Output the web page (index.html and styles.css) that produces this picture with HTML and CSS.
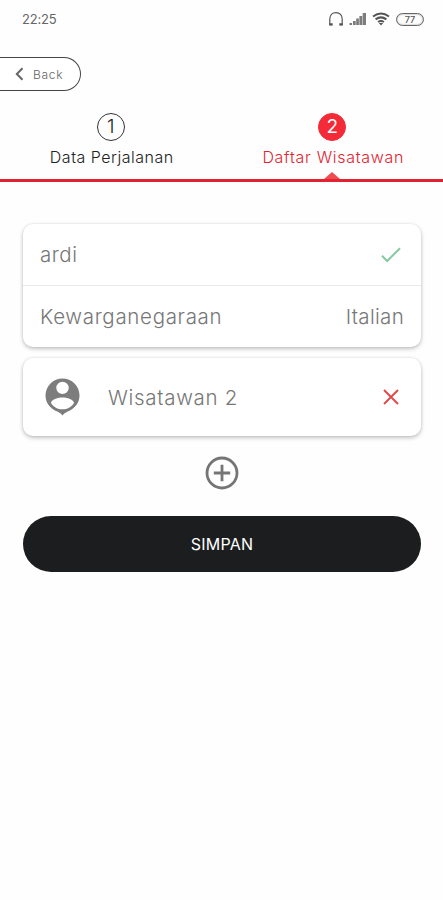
FILE: index.html
```html
<!DOCTYPE html>
<html lang="id">
<head>
<meta charset="utf-8">
<title>Daftar Wisatawan</title>
<link rel="stylesheet" href="styles.css">
</head>
<body>
<header class="status">
  <span class="time">22:25</span>
  <div class="indicators">
    <svg width="16" height="16" viewBox="0 0 16 16" fill="none" stroke="#555"><path d="M4 13.700H1.800V8c0-4 2.400-6.400 6.200-6.400S14.200 4 14.200 8v5.700H12" stroke-width="1.200"/><path d="M1.300 13.300h3.400M11.300 13.300h3.400" stroke-width="2.200"/></svg>
    <svg class="signal" width="18" height="14" viewBox="0 0 18 14" fill="#7c7c7c"><path d="M.5 11H3v2H.5zM4 9h2.700v4H4zM7.200 6.500h2.700V13H7.200zM10.400 4h2.800v9h-2.800zM13.700 1H17v12h-3.300z"/></svg>
    <svg class="wifi" width="18" height="14" viewBox="0 0 18 14" fill="none" stroke="#555" stroke-width="2"><path d="M1 4.500Q9-1.400 17 4.500M3.600 7.400Q9 3.300 14.400 7.400M6.100 10Q9 7.900 11.900 10"/><path d="M6.800 11h4.400L9 13.600z" fill="#555" stroke="none"/></svg>
    <span class="battery">77</span>
  </div>
</header>
<button class="back">
  <svg width="9" height="14" viewBox="0 0 9 14" fill="none" stroke="#666" stroke-width="2"><path d="M7.500 1.200L1.800 7l5.700 5.800"/></svg>
  <span>Back</span>
</button>
<nav class="steps">
  <div class="step"><span class="num">1</span><span class="label first">Data Perjalanan</span></div>
  <div class="step active"><span class="num">2</span><span class="label">Daftar Wisatawan</span></div>
</nav>
<main>
  <section class="card">
    <div class="row name"><span class="ardi">ardi</span>
      <svg width="20" height="16" viewBox="0 0 20 16" fill="none" stroke="#87c9a2" stroke-width="2"><path d="M1 8.800l5.200 5.200L19 1.200"/></svg>
    </div>
    <div class="row nation"><span class="key">Kewarganegaraan</span><span class="value">Italian</span></div>
  </section>
  <section class="card traveller">
    <svg class="person" width="35" height="38" viewBox="0 0 35 38"><path fill="#7d7d7d" fill-rule="evenodd" d="M17.500.5A17 17 0 0 0 .5 17.500c0 7 4.200 12.500 10.500 15.500 2.500 1.100 4.500 1.900 6.500 4.500 2-2.600 4-3.400 6.500-4.500 6.300-3 10.500-8.500 10.500-15.500a17 17 0 0 0-17-17zm0 3.200a6.200 6.200 0 1 1 0 12.400 6.200 6.200 0 0 1 0-12.400zm0 15.700c6 0 11.500 2.600 11.500 5.500-2.600 4-6.700 6.400-11.500 6.400S8.600 28.900 6 24.900c0-2.900 5.500-5.500 11.500-5.500z"/></svg>
    <span class="tname">Wisatawan 2</span>
    <svg class="cross" width="16" height="16" viewBox="0 0 16 16" stroke="#e34848" stroke-width="1.900"><path d="M1 1l14 14M15 1L1 15"/></svg>
  </section>
  <svg class="add" width="34" height="34" viewBox="0 0 34 34" fill="none" stroke="#757575" stroke-width="2.800"><circle cx="17" cy="17" r="15"/><path d="M17 8.800v16.400M8.800 17h16.400"/></svg>
  <button class="save"><span>SIMPAN</span></button>
</main>
</body>
</html>
```
FILE: styles.css
```css
* { box-sizing: border-box; }
body {
  margin: 0;
  min-height: 900px;
  background: #fefefe;
  color: #777;
  font-family: Inter, "Open Sans", sans-serif;
  font-weight: 300;
}
button { font: inherit; }
svg { display: block; flex: none; }
.status {
  height: 57px;
  padding: 10px 19px 0 22px;
  display: flex;
  justify-content: space-between;
  align-items: flex-start;
}
.time { font-size: 13px; line-height: 18px; color: #666; font-weight: 400; letter-spacing: -0.2px; }
.indicators { display: flex; align-items: center; height: 18px; }
.signal { margin-left: 5px; }
.wifi { margin-left: 5px; }
.battery {
  width: 28px;
  height: 13px;
  margin-left: 6px;
  border: 1.500px solid #666;
  border-radius: 7px;
  box-shadow: inset 0 0 2px #888;
  font-size: 9px;
  font-weight: 500;
  line-height: 11px;
  text-align: center;
  color: #555;
}
.back {
  display: flex;
  align-items: center;
  gap: 9px;
  width: 81px;
  height: 34px;
  padding: 0 0 0 15px;
  border: 1px solid #444;
  border-left: 0;
  border-radius: 0 17px 17px 0;
  background: #fff;
  color: #666;
  font-size: 12px;
  letter-spacing: 0.700px;
}
.steps {
  display: flex;
  height: 91px;
  padding-top: 22px;
  border-bottom: 3px solid #e3222f;
}
.step {
  flex: 1;
  position: relative;
  display: flex;
  flex-direction: column;
  align-items: center;
  color: #222;
}
.num {
  width: 28px;
  height: 28px;
  border: 1px solid #333;
  border-radius: 50%;
  font-size: 19px;
  line-height: 26px;
  text-align: center;
}
.label { margin: 6px 0 0 2px; font-size: 16px; line-height: 20px; white-space: nowrap; letter-spacing: 0.700px; }
.first { letter-spacing: 0.500px; }
.active { color: #e3222f; }
.active .num { background: #f42a38; border-color: #f42a38; color: #fff; font-weight: 400; }
.active::after {
  content: "";
  position: absolute;
  bottom: 0;
  border: 8px solid transparent;
  border-top: 0;
  border-bottom: 7px solid #ef4b50;
}
main { padding: 42px 22px 0 23px; display: flex; flex-direction: column; }
.card {
  background: #fff;
  border-radius: 10px;
  box-shadow: 0 2px 4px rgba(0,0,0,.22), 0 0 3px rgba(0,0,0,.1);
  font-size: 20.500px;
}
.row { display: flex; align-items: center; justify-content: space-between; padding: 0 17px; }
.name { height: 62px; border-bottom: 1px solid #eaeaea; padding-right: 20px; }
.nation { height: 61px; }
.key { letter-spacing: 0.680px; }
.ardi { letter-spacing: 0.500px; }
.value { letter-spacing: 0.300px; }
.traveller { margin-top: 11px; height: 78px; display: flex; align-items: center; padding: 0 22px; }
.tname { margin-left: 28px; letter-spacing: 0.700px; }
.cross { margin-left: auto; }
.add { margin: 20px auto 0; }
.save {
  height: 56px;
  margin-top: 26px;
  border: 0;
  border-radius: 28px;
  background: #1b1d1e;
  color: #fff;
  font-size: 16px;
  font-weight: 400;
  letter-spacing: 0.200px;
}
```
